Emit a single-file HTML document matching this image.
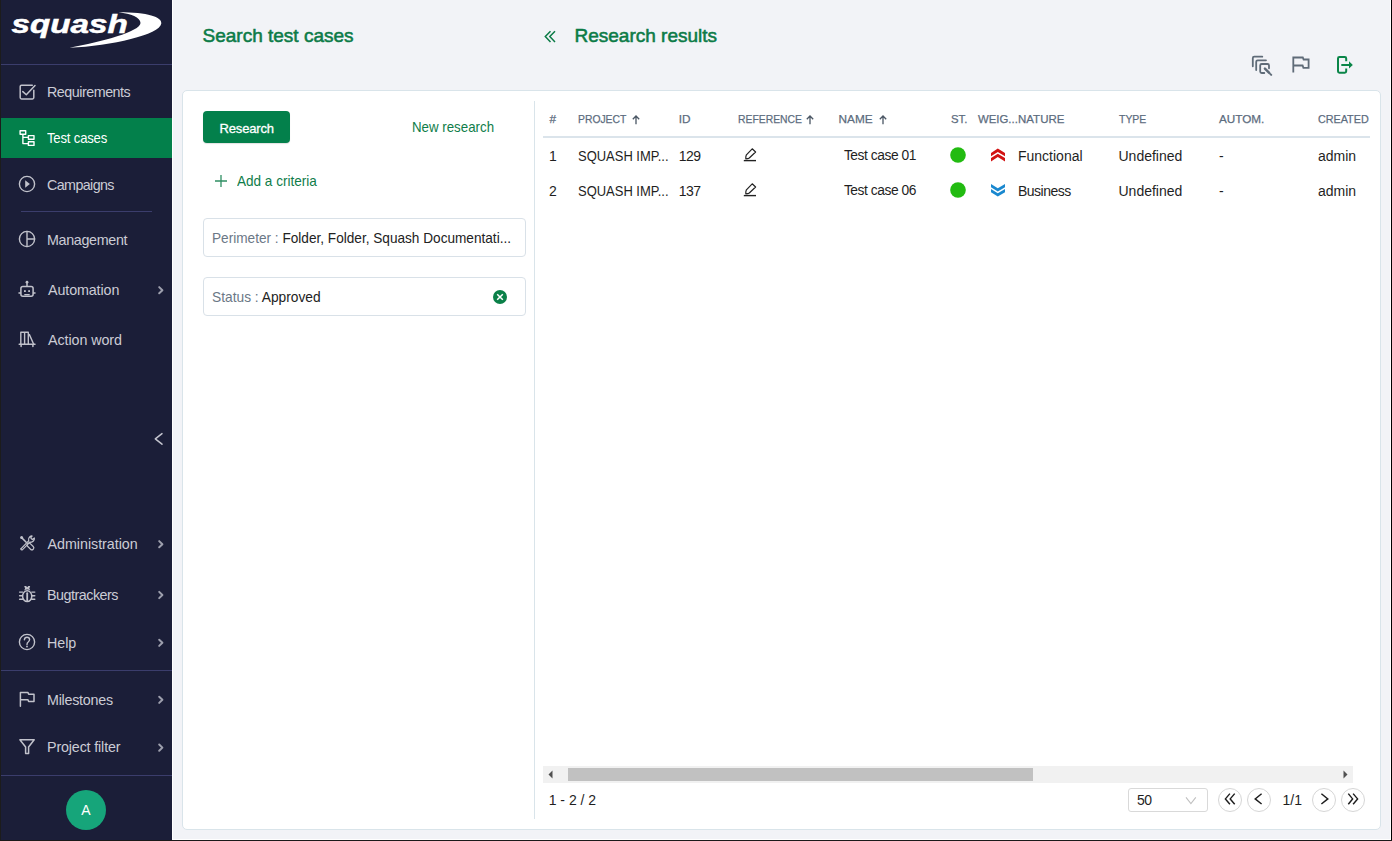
<!DOCTYPE html>
<html><head><meta charset="utf-8">
<style>
*{box-sizing:border-box;margin:0;padding:0}
html,body{width:1392px;height:841px;overflow:hidden;background:#f2f3f7;font-family:"Liberation Sans",sans-serif;position:relative}
.a{position:absolute;white-space:nowrap;line-height:1}
#side{left:1px;top:0;width:171px;height:840px;background:#1b1e38}
.sep{position:absolute;height:1px;background:#3b3d6c}
.nt{position:absolute;left:47px;font-size:14.3px;color:#cbccd5;line-height:1;white-space:nowrap}
.title{position:absolute;color:#0c7b47;font-weight:normal;font-size:19px;-webkit-text-stroke:0.55px #0c7b47;white-space:nowrap;line-height:1}
#panel{position:absolute;left:182px;top:90px;width:1199px;height:740px;background:#fff;border:1px solid #d9e4ea;border-radius:5px}
.field{position:absolute;left:203px;width:323px;height:39px;border:1px solid #d9e1e8;border-radius:4px;background:#fff}
.fl{color:#6b7886}
.fv{color:#222}
.hd{position:absolute;top:113.8px;font-size:11.8px;transform-origin:0 0;-webkit-text-stroke:0.25px #5c6c7e;color:#5c6c7e;line-height:1;white-space:nowrap}
.td{position:absolute;font-size:14px;color:#1f1f1f;line-height:1;white-space:nowrap}
.pc{position:absolute;top:788px;width:24px;height:24px;border:1px solid #d6d6d6;border-radius:50%;background:#fff}
</style></head><body>
<div class="a" id="side"></div>
<div class="a" style="left:1px;top:118px;width:171px;height:40px;background:#03804b"></div>

<div class="sep" style="left:1px;top:64px;width:171px"></div>
<div class="sep" style="left:21px;top:211px;width:131px"></div>
<div class="sep" style="left:1px;top:670px;width:171px"></div>
<div class="sep" style="left:1px;top:775px;width:171px"></div>

<!-- logo -->
<svg class="a" style="left:0;top:0" width="172" height="64" viewBox="0 0 172 64">
  <path d="M118.5,12.3 C148,12.3 162,17 161.3,23.5 C160,34.5 112,46 69.5,47.8 C102,41.8 140.5,31.5 140.5,23 C140.5,17.5 131,13.8 118.5,12.3 Z" fill="#fff"/>
  <text x="0" y="0" transform="translate(11.4,33.4) scale(1.33,1)" font-family="Liberation Sans" font-weight="bold" font-style="italic" font-size="25" fill="#fff" stroke="#fff" stroke-width="0.5">squash</text>
</svg>

<span class="nt" style="top:85.33px;letter-spacing:-0.48px">Requirements</span>
<span class="nt" style="top:131.33px;color:#fff;letter-spacing:-0.2px;transform:scaleX(0.917);transform-origin:0 0">Test cases</span>
<span class="nt" style="top:177.53px;letter-spacing:-0.60px">Campaigns</span>
<span class="nt" style="top:232.53px;letter-spacing:-0.32px">Management</span>
<span class="nt" style="top:282.53px;left:48px;letter-spacing:-0.11px">Automation</span>
<span class="nt" style="top:332.53px;left:48px;letter-spacing:-0.08px">Action word</span>
<span class="nt" style="top:536.73px;left:47.6px;letter-spacing:-0.04px">Administration</span>
<span class="nt" style="top:587.53px;letter-spacing:-0.48px">Bugtrackers</span>
<span class="nt" style="top:635.53px;letter-spacing:-0.07px">Help</span>
<span class="nt" style="top:692.53px;letter-spacing:-0.25px">Milestones</span>
<span class="nt" style="top:740.23px;letter-spacing:-0.15px">Project filter</span>

<!-- sidebar icons -->
<svg class="a" style="left:0;top:0" width="172" height="841" viewBox="0 0 172 841" fill="none" stroke="#c1c2cb" stroke-width="1.5" stroke-linecap="round" stroke-linejoin="round">
  <!-- requirements -->
  <path d="M32.3,85.2 H21.5 Q20.2,85.2 20.2,86.5 V97.6 Q20.2,98.9 21.5,98.9 H32.5 Q33.8,98.9 33.8,97.6 V90.3"/>
  <path d="M22.8,91.6 L26.3,94.8 L35,85.6"/>
  <!-- test cases -->
  <g stroke="#fff" stroke-width="1.4" stroke-linecap="butt">
    <rect x="20.1" y="130.7" width="5.6" height="3.6"/>
    <rect x="28.4" y="135.6" width="5.6" height="3.6"/>
    <rect x="28.4" y="141.8" width="5.6" height="3.6"/>
    <path d="M22.9,134.3 V143.6 H28.4 M22.9,137.4 H28.4"/>
  </g>
  <!-- campaigns -->
  <circle cx="27" cy="184" r="7.6" stroke-width="1.4"/>
  <path d="M25.2,180.3 L29.9,184 L25.2,187.7 Z" fill="#c1c2cb" stroke="none"/>
  <!-- management -->
  <circle cx="27" cy="239" r="7.6" stroke-width="1.4"/>
  <path d="M27,231.4 V246.6 M27,239 H34.6" stroke-width="1.4"/>
  <!-- automation -->
  <circle cx="27" cy="282.2" r="1.4" fill="#c1c2cb" stroke="none"/>
  <path d="M27,283 V286.2"/>
  <rect x="20.9" y="286.4" width="12.2" height="9.9" rx="2"/>
  <path d="M19,293.1 H20.5 M33.5,293.1 H35"/>
  <rect x="24" y="290.2" width="1.8" height="1.8" fill="#c1c2cb" stroke="none"/>
  <rect x="28.2" y="290.2" width="1.8" height="1.8" fill="#c1c2cb" stroke="none"/>
  <path d="M24.8,294.6 H29.2" stroke-width="1.3"/>
  <!-- action word -->
  <path d="M20.8,344 V332.2 H28.3 V344 M24.6,332.2 V344 M29.4,334.6 L33.6,344" stroke-width="1.4"/>
  <path d="M19.2,344.2 H35 M21.1,344.2 V346.4 M32.9,344.2 V346.4" stroke-width="1.5"/>
  <!-- administration -->
  <circle cx="21.6" cy="537.6" r="1.5" fill="#c1c2cb" stroke="none"/>
  <path d="M21.6,537.6 L26.2,542.2" stroke-width="1.5"/>
  <rect x="-4" y="-1.9" width="8" height="3.8" rx="1.9" transform="translate(30.4,546.4) rotate(45)" stroke-width="1.2"/>
  <path d="M20.9,548.9 Q21.1,550.1 22.3,549.9 L30,542.2" stroke-width="1.2"/>
  <path d="M20.9,548.9 L28.6,540.8" stroke-width="1.2"/>
  <path d="M28.6,540.8 Q28,538.3 29.8,536.7 Q31,535.8 32.2,536 L30.7,537.9 L32.3,539.6 L34.4,538 Q34.6,539.6 33.4,541 Q31.8,542.6 30,542.2" stroke-width="1.2"/>
  <!-- bugtrackers -->
  <ellipse cx="27.2" cy="596.2" rx="4.6" ry="5.4" stroke-width="1.5"/>
  <path d="M27.2,593.2 V600.6" stroke-width="1.8"/>
  <path d="M24.2,586 H26.1 L27.2,587.3 L28.3,586 H30.2 L29.3,588.6 L30.3,590.4 Q27.2,588.8 24.1,590.4 L25.1,588.6 Z" fill="#c1c2cb" stroke="none"/>
  <path d="M19.6,592.1 H22.6 M19.6,595.8 H22.3 M19.6,599.2 H22.6 M31.8,592.1 H34.8 M32.1,595.8 H34.8 M31.8,599.2 H34.8" stroke-width="1.4"/>
  <!-- help -->
  <circle cx="27" cy="642" r="7.6" stroke-width="1.4"/>
  <path d="M24.4,639.8 Q24.6,637.2 27,637.2 Q29.6,637.2 29.6,639.6 Q29.6,641 28.2,642 Q27,642.8 27,644.4" stroke-width="1.4"/>
  <circle cx="27" cy="646.5" r="0.9" fill="#c1c2cb" stroke="none"/>
  <!-- milestones -->
  <path d="M20.4,706.3 V692.6 H28 L28.7,694.3 H34 V701.4 H28.6 L28,699.8 H20.4" stroke-width="1.5"/>
  <!-- project filter -->
  <path d="M19.9,739.8 H34.2 L28.6,747 V753.4 H25.6 V747 Z" stroke-width="1.5"/>
  <!-- chevrons -->
  <g stroke-width="2" stroke="#9d9fad">
    <path d="M159.2,287.1 L162.4,290.2 L159.2,293.3"/>
    <path d="M159.2,541.1 L162.4,544.2 L159.2,547.3"/>
    <path d="M159.2,591.9 L162.4,595.0 L159.2,598.1"/>
    <path d="M159.2,639.7 L162.4,642.8 L159.2,645.9"/>
    <path d="M159.2,696.7 L162.4,699.8 L159.2,702.9"/>
    <path d="M159.2,744.5 L162.4,747.6 L159.2,750.7"/>
  </g>
  <path d="M162,433.6 L155.3,438.9 L162,444.2" stroke="#c3c4ce" stroke-width="1.5"/>
</svg>

<div class="a" style="left:66px;top:790px;width:40px;height:40px;border-radius:50%;background:#16a57a;color:#fff;font-size:14px;text-align:center;line-height:40px">A</div>

<div class="title" style="left:202.5px;top:26.3px">Search test cases</div>
<div class="title" style="left:574.5px;top:26.3px">Research results</div>
<svg class="a" style="left:540px;top:28px" width="20" height="18" viewBox="0 0 20 18" fill="none" stroke="#0c7b47" stroke-width="1.5">
  <path d="M10.5,3.2 L5.3,8.6 L10.5,14 M15,3.2 L9.8,8.6 L15,14"/>
</svg>

<!-- toolbar icons -->
<svg class="a" style="left:1240px;top:45px" width="130" height="40" viewBox="0 0 130 40" fill="none" stroke="#5f6b78" stroke-width="1.8">
  <path d="M12.8,21.3 V13.2 Q12.8,11.7 14.3,11.7 H22.3" stroke-linecap="round"/>
  <path d="M16.2,25 V16.8 Q16.2,15.3 17.7,15.3 H26" stroke-linecap="round"/>
  <path d="M29,23.3 V20.5 Q29,19 27.5,19 H21.7 Q20.2,19 20.2,20.5 V26.5 Q20.2,28 21.7,28 H24.3" stroke-linecap="round"/>
  <path d="M24.9,23.6 L29.2,27.9" stroke-width="2.4" stroke-linecap="round"/>
  <path d="M30.4,29.1 L31.2,29.9" stroke-width="2" stroke-linecap="round"/>
  <path d="M53.3,27.5 V12.5 H62.8 L63.6,14.5 H68.6 V22.8 H63.4 L62.6,20.5 H53.3"/>
  <g stroke="#0a8548" stroke-width="2">
    <path d="M106.2,16.2 V13.5 Q106.2,12.1 104.8,12.1 H99.4 Q98,12.1 98,13.5 V26.3 Q98,27.7 99.4,27.7 H104.8 Q106.2,27.7 106.2,26.3 V23.4"/>
    <path d="M101.3,20 H109.5"/>
    <path d="M109,16.3 L112.8,19.9 L109,23.4 Z" fill="#0a8548" stroke="none"/>
  </g>
</svg>

<div id="panel"></div>

<!-- left search panel -->
<div class="a" style="left:203px;top:111px;width:87px;height:32px;background:#03804b;border-radius:4px;box-shadow:0 1px 1px rgba(0,0,0,0.12)"></div>
<span class="a" style="left:219.5px;top:121.7px;font-size:13px;color:#fff;-webkit-text-stroke:0.3px #fff;letter-spacing:-0.15px">Research</span>
<span class="a" style="left:412px;top:120px;font-size:14.3px;color:#0f7d4a;transform:scaleX(0.93);transform-origin:0 0">New research</span>
<svg class="a" style="left:212px;top:172px" width="18" height="18" viewBox="0 0 18 18" stroke="#2f8f63" stroke-width="1.3"><path d="M9,3 V15 M3,9 H15"/></svg>
<span class="a" style="left:236.5px;top:173.8px;font-size:14.2px;color:#0f7d4a;transform:scaleX(0.955);transform-origin:0 0">Add a criteria</span>

<div class="field" style="top:218px"></div>
<span class="a" style="left:212.4px;top:231px;font-size:14.2px;transform:scaleX(0.96);transform-origin:0 0"><span class="fl">Perimeter : </span><span class="fv">Folder, Folder, Squash Documentati...</span></span>
<div class="field" style="top:277px"></div>
<span class="a" style="left:212.4px;top:289.8px;font-size:14.2px;transform:scaleX(0.97);transform-origin:0 0"><span class="fl">Status : </span><span class="fv">Approved</span></span>
<svg class="a" style="left:492px;top:289px" width="16" height="16" viewBox="0 0 16 16"><circle cx="8" cy="8" r="7" fill="#0a8048"/><path d="M5.2,5.2 L10.8,10.8 M10.8,5.2 L5.2,10.8" stroke="#fff" stroke-width="1.5"/></svg>

<!-- divider -->
<div class="a" style="left:534px;top:101px;width:1px;height:718px;background:#d9e4ea"></div>

<!-- table header -->
<div class="a" style="left:543px;top:136px;width:827px;height:2px;background:#dbe4eb"></div>
<span class="hd" style="left:549.5px">#</span>
<span class="hd" style="left:578.3px;transform:scaleX(0.878)">PROJECT</span>
<span class="hd" style="left:678.8px">ID</span>
<span class="hd" style="left:738.3px;transform:scaleX(0.879)">REFERENCE</span>
<span class="hd" style="left:838.6px;transform:scaleX(1.0)">NAME</span>
<span class="hd" style="left:950.6px;transform:scaleX(0.96)">ST.</span>
<span class="hd" style="left:978.2px;transform:scaleX(0.965)">WEIG...</span>
<span class="hd" style="left:1018px;transform:scaleX(0.974)">NATURE</span>
<span class="hd" style="left:1118.5px;transform:scaleX(0.887)">TYPE</span>
<span class="hd" style="left:1218.5px;transform:scaleX(0.993)">AUTOM.</span>
<span class="hd" style="left:1318.2px;transform:scaleX(0.913)">CREATED</span>
<svg class="a" style="left:540px;top:110px" width="360" height="20" viewBox="0 0 360 20" fill="none" stroke="#4a5664" stroke-width="1.3">
  <path d="M96,14.3 V6 M92.8,9.2 L96,6 L99.2,9.2"/>
  <path d="M270,14.3 V6 M266.8,9.2 L270,6 L273.2,9.2"/>
  <path d="M343,14.3 V6 M339.8,9.2 L343,6 L346.2,9.2"/>
</svg>

<!-- rows -->
<span class="td" style="left:549px;top:148.5px">1</span>
<span class="td" style="left:578.3px;top:150.2px;font-size:13.8px;transform:scaleX(0.94);transform-origin:0 0">SQUASH IMP...</span>
<span class="td" style="left:678.8px;top:148.5px;letter-spacing:-0.6px">129</span>
<span class="td" style="left:843.9px;top:148.6px;font-size:13.8px;letter-spacing:-0.45px">Test case 01</span>
<span class="td" style="left:1018px;top:148.7px">Functional</span>
<span class="td" style="left:1118.5px;top:148.7px">Undefined</span>
<span class="td" style="left:1219px;top:148.7px">-</span>
<span class="td" style="left:1318px;top:148.7px">admin</span>

<span class="td" style="left:549px;top:183.5px">2</span>
<span class="td" style="left:578.3px;top:185.2px;font-size:13.8px;transform:scaleX(0.94);transform-origin:0 0">SQUASH IMP...</span>
<span class="td" style="left:678.8px;top:183.5px;letter-spacing:-0.6px">137</span>
<span class="td" style="left:843.9px;top:183.6px;font-size:13.8px;letter-spacing:-0.45px">Test case 06</span>
<span class="td" style="left:1018px;top:183.7px;letter-spacing:-0.5px">Business</span>
<span class="td" style="left:1118.5px;top:183.7px">Undefined</span>
<span class="td" style="left:1219px;top:183.7px">-</span>
<span class="td" style="left:1318px;top:183.7px">admin</span>

<svg class="a" style="left:730px;top:140px" width="290" height="70" viewBox="0 0 290 70" fill="none">
  <!-- pens -->
  <g stroke="#222" stroke-width="1.2" stroke-linejoin="round">
    <path d="M22.2,8.8 L25.6,12 L19.3,18 Q18.2,18.8 15.8,18.8 Q15.6,16.4 16.4,14.8 Z"/>
    <path d="M13.8,20.6 H26" stroke-width="1.4"/>
    <path d="M22.2,43.8 L25.6,47 L19.3,53 Q18.2,53.8 15.8,53.8 Q15.6,51.4 16.4,49.8 Z"/>
    <path d="M13.8,55.6 H26" stroke-width="1.4"/>
  </g>
  <circle cx="228" cy="15" r="7.8" fill="#22bb11"/>
  <circle cx="228" cy="50" r="7.8" fill="#22bb11"/>
  <path d="M261,12.9 L267.8,8.6 L275,12.9 L275,16.2 L267.8,11.9 L261,16.2 Z M261,18.1 L267.8,13.8 L275,18.1 L275,21.4 L267.8,17.1 L261,21.4 Z" fill="#d21212"/>
  <path d="M261,43.9 L267.8,48.2 L275,43.9 L275,47.2 L267.8,51.5 L261,47.2 Z M261,48.9 L267.8,53.2 L275,48.9 L275,52.2 L267.8,56.5 L261,52.2 Z" fill="#1a88cf"/>
</svg>

<!-- scrollbar -->
<div class="a" style="left:543px;top:766px;width:810px;height:17px;background:#f1f1f1"></div>
<div class="a" style="left:568px;top:768px;width:465px;height:13px;background:#c1c1c1"></div>
<svg class="a" style="left:543px;top:766px" width="810" height="17" viewBox="0 0 810 17"><path d="M5.5,8.5 L9.5,4.5 V12.5 Z" fill="#505050"/><path d="M804.5,8.5 L800.5,4.5 V12.5 Z" fill="#505050"/></svg>

<span class="td" style="left:548.7px;top:793.4px">1 - 2 / 2</span>

<!-- pagination -->
<div class="a" style="left:1128px;top:788px;width:80px;height:24px;border:1px solid #d9d9d9;border-radius:3px;background:#fff"></div>
<span class="td" style="left:1137px;top:793.4px;letter-spacing:-0.6px">50</span>
<svg class="a" style="left:1180px;top:793px" width="20" height="14" viewBox="0 0 20 14" fill="none" stroke="#c0c0c0" stroke-width="1.1"><path d="M6,4.4 L10.9,10.6 L15.8,4.4"/></svg>
<div class="pc" style="left:1218px"></div>
<div class="pc" style="left:1247px"></div>
<div class="pc" style="left:1312px"></div>
<div class="pc" style="left:1341px"></div>
<span class="td" style="left:1282.5px;top:793.4px">1/1</span>
<svg class="a" style="left:1210px;top:785px" width="170" height="30" viewBox="0 0 170 30" fill="none" stroke="#1e1e1e" stroke-width="1.45">
  <path d="M19.9,8.6 L15.4,13.9 L19.9,19.2 M24.7,8.6 L20.2,13.9 L24.7,19.2"/>
  <path d="M51.6,8.8 L45.2,13.9 L51.6,19"/>
  <path d="M111.4,8.8 L117.8,13.9 L111.4,19"/>
  <path d="M138.3,8.6 L142.6,13.9 L138.3,19.2 M143.1,8.6 L147.6,13.9 L143.1,19.2"/>
</svg>

<!-- frame -->
<div class="a" style="left:0;top:0;width:1px;height:841px;background:#1c1c1c"></div>
<div class="a" style="left:172px;top:0;width:1px;height:840px;background:#fff"></div>
<div class="a" style="left:1390px;top:0;width:1px;height:840px;background:#fff"></div>
<div class="a" style="left:1391px;top:0;width:1px;height:841px;background:#000"></div>
<div class="a" style="left:172px;top:839px;width:1219px;height:1px;background:#fff"></div>
<div class="a" style="left:0;top:840px;width:1392px;height:1px;background:#1a1a1a"></div>
</body></html>
